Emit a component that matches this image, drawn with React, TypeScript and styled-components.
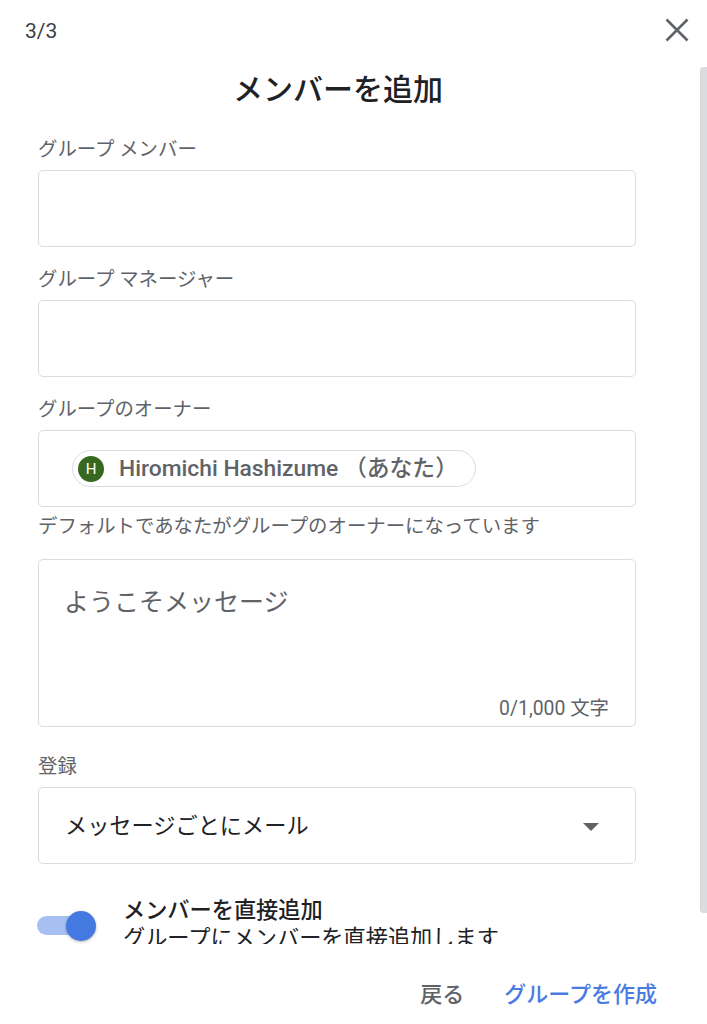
import React from 'react';
import styled, { createGlobalStyle } from 'styled-components';

const GlobalStyle = createGlobalStyle`
  html, body {
    margin: 0;
    padding: 0;
    background: #ffffff;
  }
  body {
    font-family: Roboto, "Noto Sans CJK JP", "Noto Sans", sans-serif;
    color: #202124;
  }
`;

const Dialog = styled.div`
  width: 707px;
  height: 1024px;
  display: flex;
  flex-direction: column;
  overflow: hidden;
  background: #ffffff;
`;

const Header = styled.div`
  height: 60px;
  display: flex;
  align-items: center;
  justify-content: space-between;
  padding: 0 12px 0 25px;
  box-sizing: border-box;
`;

const Step = styled.span`
  font-size: 21px;
  line-height: 28px;
  color: #3c4043;
  margin-top: 2px;
`;

const CloseButton = styled.button`
  width: 36px;
  height: 36px;
  border: none;
  background: transparent;
  padding: 0;
  display: flex;
  align-items: center;
  justify-content: center;
  cursor: pointer;
`;

const ScrollArea = styled.div`
  position: relative;
  height: 884px;
  overflow: hidden;
`;

const ScrollThumb = styled.div`
  position: absolute;
  top: 7px;
  right: 0;
  width: 6px;
  height: 846px;
  background: #dadce0;
  border-left: 1px solid #d2d4d9;
  border-radius: 4px 0 0 4px;
`;

const Content = styled.div`
  width: 598px;
  padding: 10px 0 0 38px;
  display: flex;
  flex-direction: column;
`;

const Title = styled.h1`
  margin: 0 0 28px;
  font-size: 30px;
  line-height: 40px;
  font-weight: 500;
  text-align: center;
  color: #202124;
  width: 600px;
`;

const Field = styled.div<{ $gap?: number }>`
  display: flex;
  flex-direction: column;
  gap: 8px;
  margin-bottom: ${(p) => p.$gap ?? 21}px;
`;

const Label = styled.label`
  font-size: 19.4px;
  line-height: 24px;
  color: #5f6368;
`;

const Box = styled.div<{ $height?: number }>`
  height: ${(p) => p.$height ?? 77}px;
  box-sizing: border-box;
  border: 1px solid #dadce0;
  border-radius: 5px;
  display: flex;
  align-items: center;
  background: #ffffff;
`;

const OwnerBox = styled(Box)`
  padding-left: 33px;
`;

const Chip = styled.div`
  height: 37px;
  box-sizing: border-box;
  border: 1px solid #dadce0;
  border-radius: 19px;
  display: flex;
  align-items: center;
  gap: 15px;
  padding: 0 17px 0 5px;
`;

const Avatar = styled.span`
  width: 26px;
  height: 26px;
  border-radius: 50%;
  background: #36681f;
  color: #ffffff;
  font-size: 15px;
  font-weight: 400;
  display: flex;
  align-items: center;
  justify-content: center;
`;

const ChipName = styled.span`
  font-size: 22.8px;
  font-weight: 500;
  color: #5f6368;
  line-height: 28px;
`;

const Help = styled.div`
  font-size: 19.4px;
  line-height: 26px;
  color: #5f6368;
  margin-top: 7px;
  margin-bottom: 19px;
`;

const MessageBox = styled.div`
  height: 168px;
  box-sizing: border-box;
  border: 1px solid #dadce0;
  border-radius: 5px;
  padding: 27px 26px 4px 25px;
  display: flex;
  flex-direction: column;
  justify-content: space-between;
  margin-bottom: 28px;
`;

const Placeholder = styled.div`
  font-size: 25px;
  line-height: 32px;
  color: #5f6368;
`;

const Counter = styled.div`
  align-self: flex-end;
  font-size: 19.4px;
  line-height: 26px;
  color: #5f6368;
`;

const SelectBox = styled(Box)`
  justify-content: space-between;
  padding: 0 36px 0 26px;
`;

const SelectText = styled.span`
  font-size: 22.2px;
  line-height: 28px;
  color: #202124;
`;

const Caret = styled.span`
  width: 0;
  height: 0;
  border-left: 8px solid transparent;
  border-right: 8px solid transparent;
  border-top: 8px solid #5f6368;
  margin-top: 2px;
`;

const ToggleRow = styled.div`
  display: flex;
  align-items: center;
  gap: 27px;
  margin-top: 32px;
  margin-left: -1px;
`;

const Switch = styled.span`
  position: relative;
  width: 59px;
  height: 32px;
  display: flex;
  align-items: center;
  flex-shrink: 0;
  margin-top: 2px;
`;

const Track = styled.span`
  width: 53px;
  height: 19px;
  border-radius: 10px;
  background: #a6c0f4;
`;

const Knob = styled.span`
  position: absolute;
  right: 0;
  top: 1px;
  width: 30px;
  height: 30px;
  border-radius: 50%;
  background: #4479e1;
  box-shadow: 0 1px 3px rgba(0, 0, 0, 0.3);
`;

const ToggleText = styled.div`
  display: flex;
  flex-direction: column;
`;

const ToggleTitle = styled.span`
  font-size: 22.2px;
  line-height: 28px;
  font-weight: 500;
  color: #202124;
`;

const ToggleSub = styled.span`
  font-size: 22.2px;
  line-height: 29px;
  color: #202124;
`;

const Footer = styled.div`
  flex: 1;
  display: flex;
  align-items: flex-start;
  justify-content: flex-end;
  gap: 4px;
  padding: 25px 32px 0 0;
  box-sizing: border-box;
`;

const FooterButton = styled.button<{ $primary?: boolean }>`
  border: none;
  background: transparent;
  font-family: Roboto, "Noto Sans CJK JP", sans-serif;
  font-size: 22px;
  font-weight: 500;
  line-height: 28px;
  padding: 12px 18px;
  color: ${(p) => (p.$primary ? '#4a7be3' : '#5f6368')};
  cursor: pointer;
`;

export default function App() {
  return (
    <>
      <GlobalStyle />
      <Dialog>
        <Header>
          <Step>3/3</Step>
          <CloseButton aria-label="閉じる">
            <svg width="24" height="24" viewBox="0 0 24 24">
              <path
                d="M1.5 1.5 L22.5 22.5 M22.5 1.5 L1.5 22.5"
                stroke="#5f6368"
                strokeWidth="2.6"
                fill="none"
              />
            </svg>
          </CloseButton>
        </Header>
        <ScrollArea>
          <Content>
            <Title>メンバーを追加</Title>
            <Field>
              <Label>グループ メンバー</Label>
              <Box />
            </Field>
            <Field>
              <Label>グループ マネージャー</Label>
              <Box />
            </Field>
            <Field $gap={0}>
              <Label>グループのオーナー</Label>
              <OwnerBox $height={77}>
                <Chip>
                  <Avatar>H</Avatar>
                  <ChipName>Hiromichi Hashizume （あなた）</ChipName>
                </Chip>
              </OwnerBox>
            </Field>
            <Help>デフォルトであなたがグループのオーナーになっています</Help>
            <MessageBox>
              <Placeholder>ようこそメッセージ</Placeholder>
              <Counter>0/1,000 文字</Counter>
            </MessageBox>
            <Field $gap={0}>
              <Label>登録</Label>
              <SelectBox>
                <SelectText>メッセージごとにメール</SelectText>
                <Caret />
              </SelectBox>
            </Field>
            <ToggleRow>
              <Switch>
                <Track />
                <Knob />
              </Switch>
              <ToggleText>
                <ToggleTitle>メンバーを直接追加</ToggleTitle>
                <ToggleSub>グループにメンバーを直接追加します</ToggleSub>
              </ToggleText>
            </ToggleRow>
          </Content>
          <ScrollThumb />
        </ScrollArea>
        <Footer>
          <FooterButton>戻る</FooterButton>
          <FooterButton $primary>グループを作成</FooterButton>
        </Footer>
      </Dialog>
    </>
  );
}
